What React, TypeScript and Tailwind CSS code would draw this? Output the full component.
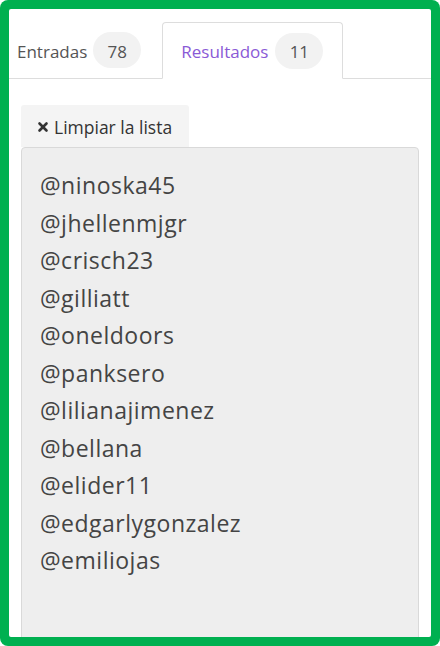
import { X } from "lucide-react";

const users = [
  "@ninoska45",
  "@jhellenmjgr",
  "@crisch23",
  "@gilliatt",
  "@oneldoors",
  "@panksero",
  "@lilianajimenez",
  "@bellana",
  "@elider11",
  "@edgarlygonzalez",
  "@emiliojas",
];

export default function App() {
  return (
    <div className="h-[646px] w-[440px] rounded-[8px] bg-[#00b050] p-[9px] font-['Open_Sans',sans-serif]">
      <div className="flex h-full flex-col overflow-hidden rounded-[2px] bg-white">
        {/* Tabs */}
        <div className="mt-[13px] flex h-[57px] shrink-0 items-stretch border-b border-[#dddddd]">
          <div className="flex items-center pl-[8px] pr-[21px]">
            <span className="pt-[3px] text-[17px] text-[#555]">Entradas</span>
            <span className="ml-[6px] flex h-[36px] w-[48px] items-center justify-center rounded-full bg-[#f2f2f2] pt-[3px] text-[17px] text-[#555]">
              78
            </span>
          </div>
          <div className="-mb-px flex items-center rounded-t-[4px] border border-b-white border-[#dddddd] bg-white pl-[18px] pr-[19px]">
            <span className="pt-[3px] text-[17px] text-[#8a5ad6]">Resultados</span>
            <span className="ml-[7px] flex h-[36px] w-[48px] items-center justify-center rounded-full bg-[#f2f2f2] pt-[3px] text-[17px] text-[#555]">
              11
            </span>
          </div>
        </div>

        {/* Content */}
        <div className="flex min-h-0 flex-1 flex-col px-[12px] pt-[26px]">
          <button className="flex h-[42px] w-[168px] shrink-0 items-center gap-[4px] rounded-t-[3px] bg-[#f4f4f4] pl-[15px] pt-[2px] text-[17.5px] text-[#333]">
            <X className="h-[14px] w-[14px]" strokeWidth={4.5} />
            Limpiar la lista
          </button>
          <div className="h-[520px] shrink-0 rounded-[4px] border border-[#d9d9d9] bg-[#eeeeee] pl-[18px] pt-[19px]">
            {users.map((u) => (
              <div key={u} className="text-[23px] leading-[37.5px] tracking-[0.5px] text-[#444]">
                {u}
              </div>
            ))}
          </div>
        </div>
      </div>
    </div>
  );
}
